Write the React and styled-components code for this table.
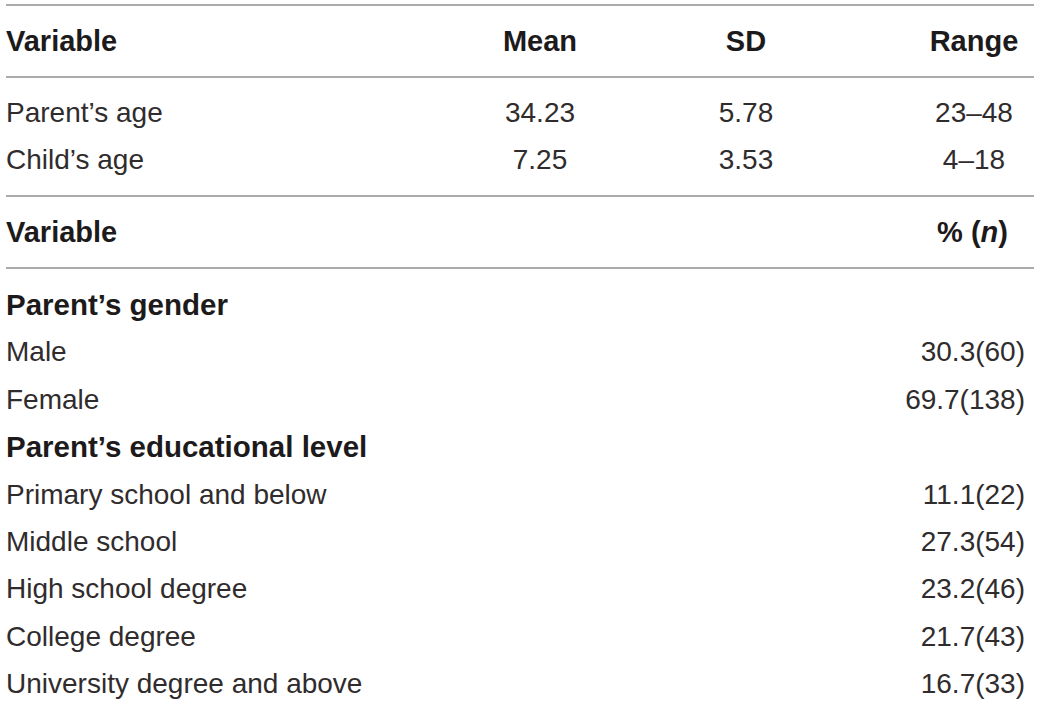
import React from 'react';
import styled, { createGlobalStyle } from 'styled-components';

const GlobalStyle = createGlobalStyle`
  html, body {
    margin: 0;
    padding: 0;
    background: #fff;
  }
  body {
    font-family: "Liberation Sans", Arial, sans-serif;
    color: #231f20;
  }
`;

const Page = styled.div`
  width: 1028px;
  margin: 4px 0 0 6px;
`;

const Table = styled.div`
  display: grid;
  grid-template-columns: ${p => p.$cols};
  border-top: 2px solid #ababab;
`;

const HeadCell = styled.div`
  height: 70px;
  line-height: 70px;
  font-size: 29px;
  font-weight: 700;
  color: #1d1a1b;
  text-align: ${p => p.$align || 'left'};
  padding-left: ${p => p.$padL || 0}px;
  padding-right: ${p => p.$padR || 0}px;
  border-bottom: 2px solid #ababab;
  white-space: nowrap;

  em {
    font-style: italic;
  }
`;

const Body = styled.div`
  grid-column: 1 / -1;
  display: grid;
  grid-template-columns: subgrid;
  padding: ${p => p.$pad};
`;

const Cell = styled.div`
  height: ${p => p.$h || 47}px;
  line-height: ${p => p.$h || 47}px;
  font-size: ${p => (p.$bold ? 29.5 : 28)}px;
  font-weight: ${p => (p.$bold ? 700 : 400)};
  color: ${p => (p.$bold ? '#1d1a1b' : '#302c2d')};
  text-align: ${p => p.$align || 'left'};
  padding-left: ${p => p.$padL || 0}px;
  padding-right: ${p => p.$padR || 0}px;
  white-space: nowrap;
`;

const ageRows = [
  { label: 'Parent\u2019s age', mean: '34.23', sd: '5.78', range: '23\u201348' },
  { label: 'Child\u2019s age', mean: '7.25', sd: '3.53', range: '4\u201318' },
];

const groups = [
  {
    title: 'Parent\u2019s gender',
    items: [
      ['Male', '30.3(60)'],
      ['Female', '69.7(138)'],
    ],
  },
  {
    title: 'Parent\u2019s educational level',
    items: [
      ['Primary school and below', '11.1(22)'],
      ['Middle school', '27.3(54)'],
      ['High school degree', '23.2(46)'],
      ['College degree', '21.7(43)'],
      ['University degree and above', '16.7(33)'],
    ],
  },
];

export default function App() {
  return (
    <Page>
      <GlobalStyle />
      <Table $cols="434px 200px 212px 1fr">
        <HeadCell>Variable</HeadCell>
        <HeadCell $align="center">Mean</HeadCell>
        <HeadCell $align="center">SD</HeadCell>
        <HeadCell $align="center" $padL={62}>Range</HeadCell>
        <Body $pad="11px 0 12px">
          {ageRows.map(r => (
            <React.Fragment key={r.label}>
              <Cell>{r.label}</Cell>
              <Cell $align="center">{r.mean}</Cell>
              <Cell $align="center">{r.sd}</Cell>
              <Cell $align="center" $padL={62}>{r.range}</Cell>
            </React.Fragment>
          ))}
        </Body>
      </Table>
      <Table $cols="1fr auto">
        <HeadCell>Variable</HeadCell>
        <HeadCell $align="right" $padR={26}>
          % (<em>n</em>)
        </HeadCell>
        <Body $pad="12px 0 0">
          {groups.map(g => (
            <React.Fragment key={g.title}>
              <Cell $bold $h={47.4}>{g.title}</Cell>
              <Cell $h={47.4} />
              {g.items.map(([label, value]) => (
                <React.Fragment key={label}>
                  <Cell $h={47.4}>{label}</Cell>
                  <Cell $h={47.4} $align="right" $padR={9}>{value}</Cell>
                </React.Fragment>
              ))}
            </React.Fragment>
          ))}
        </Body>
      </Table>
    </Page>
  );
}
